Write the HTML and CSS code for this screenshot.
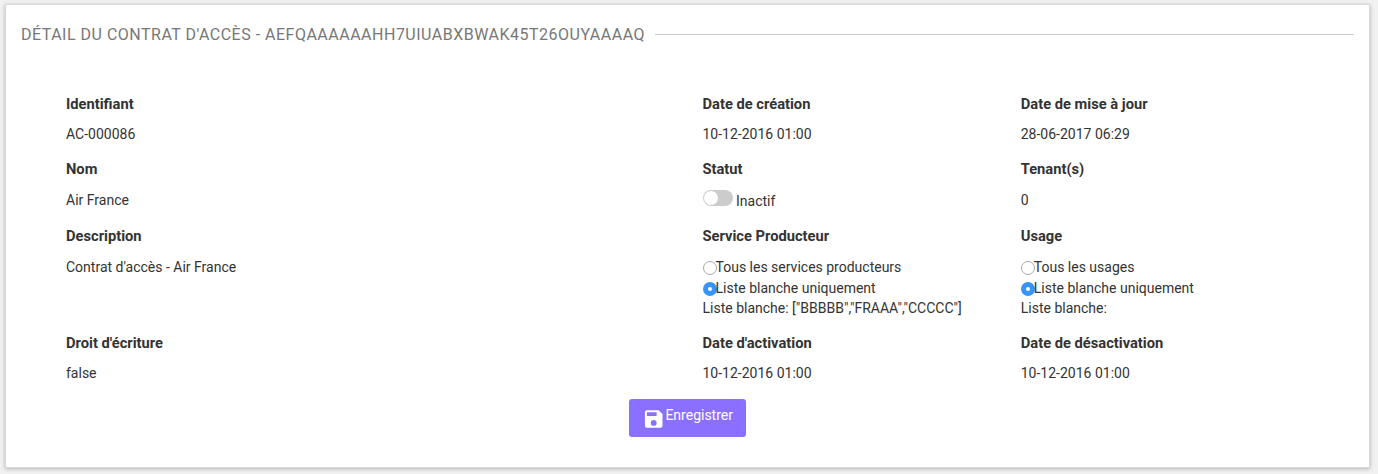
FILE: index.html
```html
<!DOCTYPE html>
<html lang="fr">
<head>
<meta charset="utf-8">
<title>Détail du contrat d'accès</title>
<link rel="stylesheet" href="styles.css">
</head>
<body>
<main class="panel">
  <header class="panel-header">
    <h1 class="title">DÉTAIL DU CONTRAT D'ACCÈS - AEFQAAAAAAHH7UIUABXBWAK45T26OUYAAAAQ</h1>
    <span class="rule"></span>
  </header>
  <section class="details">
    <div class="field"><div class="label">Identifiant</div><div class="value">AC-000086</div></div>
    <div class="field"><div class="label">Date de création</div><div class="value">10-12-2016 01:00</div></div>
    <div class="field"><div class="label">Date de mise à jour</div><div class="value">28-06-2017 06:29</div></div>
    <div class="field roomy"><div class="label">Nom</div><div class="value">Air France</div></div>
    <div class="field roomy"><div class="label">Statut</div><div class="value status"><span class="switch"></span><span class="state">Inactif</span></div></div>
    <div class="field roomy"><div class="label">Tenant(s)</div><div class="value">0</div></div>
    <div class="field roomy"><div class="label">Description</div><div class="value">Contrat d'accès - Air France</div></div>
    <div class="field"><div class="label">Service Producteur</div>
      <div class="value option"><span class="radio"></span>Tous les services producteurs</div>
      <div class="value option"><span class="radio checked"></span>Liste blanche uniquement</div>
      <div class="value">Liste blanche: ["BBBBB","FRAAA","CCCCC"]</div></div>
    <div class="field"><div class="label">Usage</div>
      <div class="value option"><span class="radio"></span>Tous les usages</div>
      <div class="value option"><span class="radio checked"></span>Liste blanche uniquement</div>
      <div class="value">Liste blanche:</div></div>
    <div class="field"><div class="label">Droit d'écriture</div><div class="value">false</div></div>
    <div class="field"><div class="label">Date d'activation</div><div class="value">10-12-2016 01:00</div></div>
    <div class="field"><div class="label">Date de désactivation</div><div class="value">10-12-2016 01:00</div></div>
  </section>
  <button class="save"><svg class="save-icon" viewBox="0 0 24 24"><path fill="currentColor" d="M17 3H5a2 2 0 0 0-2 2v14a2 2 0 0 0 2 2h14a2 2 0 0 0 2-2V7l-4-4zm-5 16a3 3 0 1 1 0-6 3 3 0 0 1 0 6zm3-10H5V5h10v4z"/></svg><span class="save-text">Enregistrer</span></button>
</main>
</body>
</html>
```
FILE: styles.css
```css
* { box-sizing: border-box; }
body { margin: 0; padding: 4px 8px 0 5px; height: 474px; overflow: hidden; background: #f1f1f1; font: 14px/20px Roboto, sans-serif; color: #333; }
.panel { height: 464px; background: #fff; border: 1px solid #d8d8d8; box-shadow: 0 1px 4px rgba(0,0,0,.25); }
.panel-header { display: flex; align-items: center; gap: 10px; padding: 19px 15px 0; height: 40px; }
.title { margin: 0; font-size: 16px; line-height: 20px; font-weight: 400; color: #777; letter-spacing: .5px; white-space: nowrap; }
.rule { flex: 1; height: 1px; background: #ccc; }
.details { display: grid; grid-template-columns: 636.5px 318.25px 300px; grid-template-rows: 65px 67px 107px 60px; padding: 49px 0 0 60px; }
.label { font-size: 14.7px; font-weight: 700; height: 20px; margin-bottom: 10px; white-space: nowrap; }
.roomy .label { margin-bottom: 11px; }
.value { white-space: nowrap; }
.status { display: flex; gap: 3.5px; }
.switch { width: 30px; height: 16px; padding: 1px; border-radius: 8px; background: #ccc; }
.switch::before { content: ""; display: block; width: 14px; height: 14px; border-radius: 50%; background: #fff; }
.state { padding-top: 1px; }
.option { display: flex; height: 21px; align-items: center; }
.radio { width: 14px; height: 14px; margin: 2px -1px 0 0; border: 1px solid #aaa; border-radius: 50%; background: #fff; }
.checked { border: 5px solid #3794fb; }
.save { display: flex; width: 117px; height: 38px; margin: 6px 0 0 623px; padding: 6px 13px; border: 0; border-radius: 3px; background: #8b6fff; color: #fff; font: 14px/20px Roboto, sans-serif; }
.save-icon { width: 24px; height: 24px; margin-top: 2px; }
.save-text { line-height: 20px; }
```
